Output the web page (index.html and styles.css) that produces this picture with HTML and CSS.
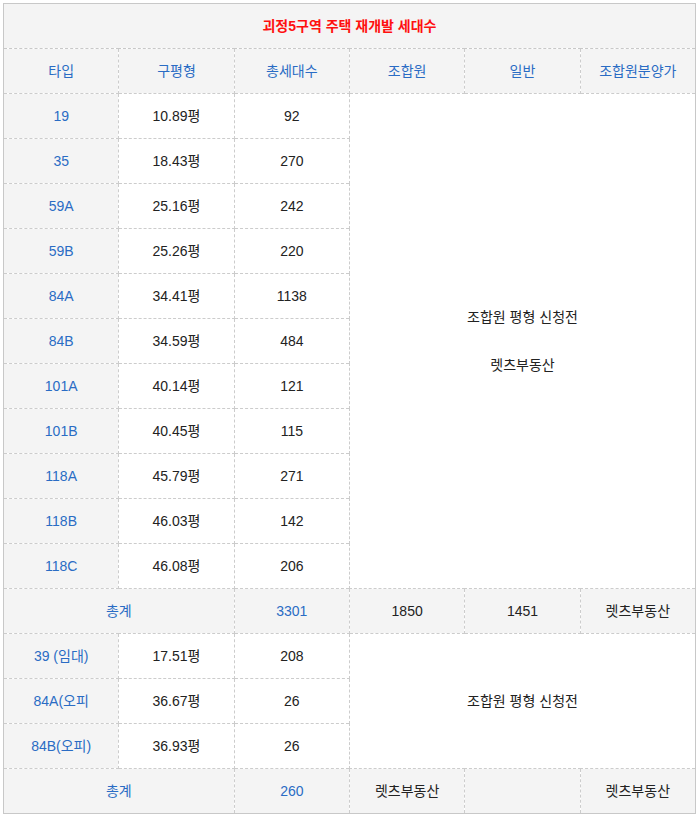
FILE: index.html
```html
<!DOCTYPE html>
<html lang="ko">
<head>
<meta charset="utf-8">
<title>괴정5구역 주택 재개발 세대수</title>
<link rel="stylesheet" href="styles.css">
</head>
<body>
<div class="wrap">
<table class="units">
  <colgroup><col><col><col><col><col><col></colgroup>
  <tr><td class="title" colspan="6">괴정5구역 주택 재개발 세대수</td></tr>
  <tr class="head">
    <td>타입</td><td>구평형</td><td>총세대수</td><td>조합원</td><td>일반</td><td>조합원분양가</td>
  </tr>
  <tr><td class="type">19</td><td>10.89평</td><td>92</td>
    <td class="merged" colspan="3" rowspan="11">조합원 평형 신청전<br><br>렛츠부동산</td></tr>
  <tr><td class="type">35</td><td>18.43평</td><td>270</td></tr>
  <tr><td class="type">59A</td><td>25.16평</td><td>242</td></tr>
  <tr><td class="type">59B</td><td>25.26평</td><td>220</td></tr>
  <tr><td class="type">84A</td><td>34.41평</td><td>1138</td></tr>
  <tr><td class="type">84B</td><td>34.59평</td><td>484</td></tr>
  <tr><td class="type">101A</td><td>40.14평</td><td>121</td></tr>
  <tr><td class="type">101B</td><td>40.45평</td><td>115</td></tr>
  <tr><td class="type">118A</td><td>45.79평</td><td>271</td></tr>
  <tr><td class="type">118B</td><td>46.03평</td><td>142</td></tr>
  <tr><td class="type">118C</td><td>46.08평</td><td>206</td></tr>
  <tr class="total">
    <td class="blue" colspan="2">총계</td><td class="blue">3301</td><td>1850</td><td>1451</td><td>렛츠부동산</td>
  </tr>
  <tr><td class="type">39 (임대)</td><td>17.51평</td><td>208</td>
    <td class="merged" colspan="3" rowspan="3">조합원 평형 신청전</td></tr>
  <tr><td class="type">84A(오피</td><td>36.67평</td><td>26</td></tr>
  <tr><td class="type">84B(오피)</td><td>36.93평</td><td>26</td></tr>
  <tr class="total">
    <td class="blue" colspan="2">총계</td><td class="blue">260</td><td>렛츠부동산</td><td></td><td>렛츠부동산</td>
  </tr>
</table>
</div>
</body>
</html>
```
FILE: styles.css
```css
html, body {
  margin: 0;
  padding: 0;
  background: #ffffff;
}
.wrap {
  padding: 3px;
}
.units {
  width: 693px;
  table-layout: fixed;
  border-collapse: collapse;
  border: 1px solid #c8c8c8;
  font-family: "Liberation Sans", "Noto Sans CJK KR", sans-serif;
  font-size: 14px;
  color: #222222;
}
.units td {
  height: 24px;
  padding: 10px 4px;
  line-height: 24px;
  text-align: center;
  vertical-align: middle;
  border: 1px dashed #cccccc;
  background: #ffffff;
  white-space: nowrap;
  overflow: hidden;
}
.units td.title {
  background: #f4f4f4;
  color: #ff1010;
  font-weight: bold;
  border-bottom-color: #c8c8c8;
}
.units .head td {
  background: #f4f4f4;
  color: #2a6cc4;
}
.units td.type {
  background: #f4f4f4;
  color: #2a6cc4;
}
.units .total td {
  background: #f4f4f4;
}
.units td.blue {
  color: #2a6cc4;
}
.units td.merged {
  background: #ffffff;
  color: #222222;
}
```
